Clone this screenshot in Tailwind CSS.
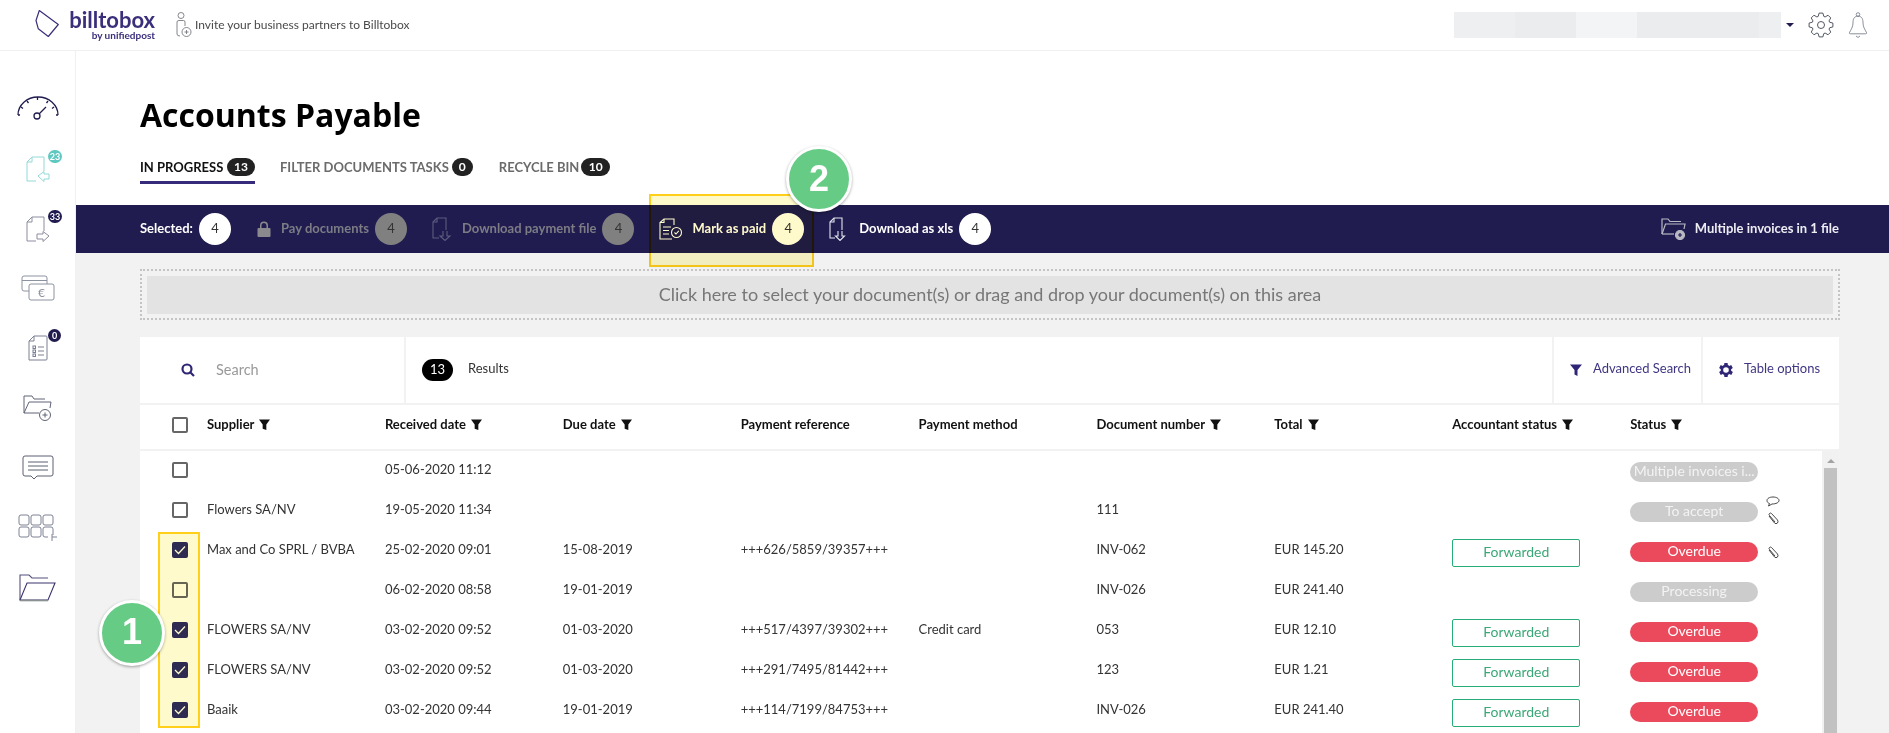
<!DOCTYPE html>
<html lang="en">
<head>
    <meta charset="UTF-8">
    <title>Accounts Payable - Billtobox</title>
    <script src="https://cdn.jsdelivr.net/npm/@tailwindcss/browser@4"></script>
</head>
<body class="h-screen overflow-hidden bg-[#f2f2f2] font-['Lato','Liberation_Sans',sans-serif] text-[13px] text-[#333]">
    <div class="relative h-[733px] w-[1889px] overflow-hidden">
        <!-- Top bar -->
        <header class="flex h-[51px] items-center border-b border-[#f0f0f0] bg-white pl-[35px]">
            <svg class="mb-[5px] h-[28px] w-[24px]" viewBox="0 0 24 28" fill="none" stroke="#3a2f7a" stroke-width="1.200"><path d="M4.300 1.500 L23.300 15.500 L13.300 27.500 L3.300 19.800 L1 11.500 Z" stroke-linejoin="round"/></svg>
            <div class="ml-[11px] flex w-[85px] flex-col items-end text-[#3a2f7a]">
                <span class="text-[22px] leading-[20px] font-bold">billtobox</span>
                <span class="text-[10px] leading-[10px] font-bold whitespace-nowrap">by unifiedpost</span>
            </div>
            <svg class="ml-[21px] h-[26px] w-[16px]" viewBox="0 0 16 26" fill="none" stroke="#77797f" stroke-width="0.900"><circle cx="5" cy="3.500" r="3"/><path d="M1 22 V10 Q1 8.500 3 8.500 H7.500 Q9 8.500 9 10 V14"/><path d="M1 22 Q1 24 4 24"/><circle cx="10.500" cy="20" r="4.500"/><path d="M10.500 18 V22 M8.500 20 H12.500"/></svg>
            <span class="ml-[3px] text-[12px] text-[#4a4a4a]">Invite your business partners to Billtobox</span>
            <div class="ml-auto flex items-center">
                <div class="flex h-[26px] w-[327px]">
                    <div class="w-[61px] bg-[#eeeff0]"></div>
                    <div class="w-[61px] bg-[#ebecee]"></div>
                    <div class="w-[61px] bg-[#f3f4f6]"></div>
                    <div class="w-[122px] bg-[#ebecee]"></div>
                    <div class="w-[22px] bg-[#eeeff0]"></div>
                </div>
                <div class="ml-[5px] h-0 w-0 border-x-[4px] border-t-[4px] border-x-transparent border-t-[#201c50]"></div>
                <svg class="ml-[14px] h-[26px] w-[26px]" viewBox="0 0 26 26" fill="none" stroke="#3f4450" stroke-width="0.900"><circle cx="13" cy="13" r="3.500"/><path d="M10.200 4.400 L11.100 1.100 H14.900 L15.800 4.400 L17.100 4.940 L20.070 3.240 L22.760 5.930 L21.060 8.900 L21.600 10.200 L24.900 11.100 V14.900 L21.600 15.800 L21.060 17.100 L22.760 20.070 L20.070 22.760 L17.100 21.060 L15.800 21.600 L14.900 24.900 H11.100 L10.200 21.600 L8.900 21.060 L5.930 22.760 L3.240 20.070 L4.940 17.100 L4.400 15.800 L1.100 14.900 V11.100 L4.400 10.200 L4.940 8.900 L3.240 5.930 L5.930 3.240 L8.900 4.940 Z" stroke-linejoin="round"/></svg>
                <svg class="mr-[21px] ml-[14px] h-[26px] w-[20px]" viewBox="0 0 20 26" fill="none" stroke="#6b7280" stroke-width="0.800"><circle cx="10" cy="2.500" r="1.800"/><path d="M10 4.200 C5.500 4.200 5 8 5 11 C5 15 3 17.500 1.500 20.500 Q1 21.800 2.500 21.800 H17.500 Q19 21.800 18.500 20.500 C17 17.500 15 15 15 11 C15 8 14.500 4.200 10 4.200 Z"/><path d="M8 24 L10 25.500 L12 24"/></svg>
            </div>
        </header>

        <div class="flex h-[682px]">
            <!-- Sidebar -->
            <aside class="flex w-[76px] shrink-0 flex-col border-r border-[#f0f0f0] bg-white pt-[27px]">
                <div class="flex h-[60px] items-center justify-center">
                    <svg class="h-[24px] w-[42px]" viewBox="0 0 42 24" fill="none" stroke="#201c50" stroke-width="1.300"><path d="M1 19 A20 18 0 0 1 41 19"/><path d="M1 19 H3 M4 11 L6 12.500 M10 5 L11.500 7 M20.500 1 V4 M31 5 L29.500 7 M37 11 L35 12.500 M41 19 H39"/><circle cx="20" cy="20" r="3"/><path d="M22 18 L29 11"/></svg>
                </div>
                <div class="relative flex h-[62px] items-center justify-center">
                    <svg class="h-[26px] w-[24px]" viewBox="0 0 24 26" fill="none" stroke="#93d9d8" stroke-width="1"><path d="M18 15 V1 H6 L1 6 V25 H10"/><path d="M6 1 V6 H1"/><path d="M12 20 L18 15.500 V18 H23 V23 H18 V25.500 Z" stroke-linejoin="round"/></svg>
                    <span class="absolute top-[12px] left-[48px] flex h-[13px] w-[14px] items-center justify-center rounded-full bg-[#5fc8c0] text-[9px] font-bold text-white">23</span>
                </div>
                <div class="relative flex h-[58px] items-center justify-center">
                    <svg class="h-[26px] w-[24px]" viewBox="0 0 24 26" fill="none" stroke="#8b8d9f" stroke-width="1"><path d="M18 15 V1 H6 L1 6 V25 H10"/><path d="M6 1 V6 H1"/><path d="M23 20 L17 15.500 V18 H11 V23 H17 V25.500 Z" stroke-linejoin="round"/></svg>
                    <span class="absolute top-[10px] left-[48px] flex h-[13px] w-[14px] items-center justify-center rounded-full bg-[#201c50] text-[9px] font-bold text-white">33</span>
                </div>
                <div class="flex h-[60px] items-center justify-center">
                    <svg class="h-[26px] w-[34px]" viewBox="0 0 34 26" fill="none" stroke="#8d92a0" stroke-width="1"><path d="M8 16 H3 Q1 16 1 14 V3 Q1 1 3 1 H24 Q26 1 26 3 V9"/><path d="M1 5.500 H26"/><rect x="8" y="9" width="25" height="16" rx="2"/><text x="20.500" y="21.500" font-size="12" fill="#8d92a0" stroke="none" text-anchor="middle">€</text></svg>
                </div>
                <div class="relative flex h-[60px] items-center justify-center">
                    <svg class="h-[26px] w-[20px]" viewBox="0 0 20 26" fill="none" stroke="#7b8093" stroke-width="1"><path d="M18 1 H6 L1 6 V25 H18 Q19 25 19 24 V2 Q19 1 18 1 Z"/><path d="M6 1 V6 H1"/><rect x="5" y="11" width="2.500" height="2.500"/><rect x="5" y="15" width="2.500" height="2.500"/><rect x="5" y="19" width="2.500" height="2.500"/><path d="M10 12 H16 M10 16 H16 M10 20 H16"/></svg>
                    <span class="absolute top-[11px] left-[48px] flex h-[13px] w-[13px] items-center justify-center rounded-full bg-[#201c50] text-[9px] font-bold text-white">0</span>
                </div>
                <div class="flex h-[60px] items-center justify-center">
                    <svg class="h-[28px] w-[30px]" viewBox="0 0 30 28" fill="none" stroke="#5f6474" stroke-width="1"><path d="M1 19 V2 H9 L11 5 H22"/><path d="M1 19 L6 8 H28 L27 14"/><path d="M1 19 H16"/><circle cx="22" cy="21" r="5.500"/><path d="M22 18.500 V23.500 M19.500 21 H24.500"/></svg>
                </div>
                <div class="flex h-[60px] items-center justify-center">
                    <svg class="h-[26px] w-[32px]" viewBox="0 0 32 26" fill="none" stroke="#5a6070" stroke-width="1"><path d="M3 1 H29 Q31 1 31 3 V19 Q31 21 29 21 H15 L12 24 L9 21 H3 Q1 21 1 19 V3 Q1 1 3 1 Z"/><path d="M6 7 H26 M6 11 H26 M6 15 H26"/></svg>
                </div>
                <div class="flex h-[60px] items-center justify-center">
                    <svg class="h-[28px] w-[40px]" viewBox="0 0 40 28" fill="none" stroke="#7d8293" stroke-width="1"><rect x="1" y="1" width="10" height="10" rx="2"/><rect x="13" y="1" width="10" height="10" rx="2"/><rect x="25" y="1" width="10" height="10" rx="2"/><rect x="1" y="13" width="10" height="10" rx="2"/><rect x="13" y="13" width="10" height="10" rx="2"/><path d="M35 21 V15 Q35 13 33 13 H27 Q25 13 25 15 V21 Q25 23 27 23 H30"/><path d="M34 23 H39 M34 20 V27"/></svg>
                </div>
                <div class="flex h-[60px] items-center justify-center">
                    <svg class="h-[28px] w-[37px]" viewBox="0 0 37 28" fill="none" stroke="#3b3470" stroke-width="1.100"><path d="M1 26 V1 H10 L13 4 H29" stroke="#55507d"/><path d="M1 26 L8 9 H36 L29 26 Z"/><path d="M1 26.500 H29" stroke="#8b9092" stroke-width="1.600"/></svg>
                </div>
            </aside>

            <main class="min-w-0 flex-1">
                <!-- Heading and tabs -->
                <section class="h-[154px] bg-white pt-[44px] pl-[64px]">
                    <h1 class="font-['Open_Sans',sans-serif] text-[32px] leading-[40px] font-bold text-black">Accounts Payable</h1>
                    <nav class="mt-[22px] flex text-[13px] font-bold whitespace-nowrap">
                        <div class="flex h-[27px] w-[115px] items-start border-b-[3px] border-[#352b7a] pt-px text-[#111]">
                            <span class="leading-[18px]">IN PROGRESS</span>
                            <span class="ml-auto flex h-[18px] w-[28px] items-center justify-center rounded-full bg-[#222] text-[12px] text-white">13</span>
                        </div>
                        <div class="ml-[25px] flex items-start pt-px text-[#6b6b6b]">
                            <span class="leading-[18px]">FILTER DOCUMENTS TASKS</span>
                            <span class="ml-[3px] flex h-[18px] w-[21px] items-center justify-center rounded-full bg-[#222] text-[12px] text-white">0</span>
                        </div>
                        <div class="ml-[26px] flex items-start pt-px text-[#6b6b6b]">
                            <span class="leading-[18px]">RECYCLE BIN</span>
                            <span class="ml-[2px] flex h-[18px] w-[29px] items-center justify-center rounded-full bg-[#222] text-[12px] text-white">10</span>
                        </div>
                    </nav>
                </section>

                <!-- Bulk action bar -->
                <section class="flex h-[48px] items-center bg-[#201c50] pr-[50px] pl-[64px] font-bold text-[#7c7c85]">
                    <span class="mb-px text-white">Selected:</span>
                    <span class="ml-[6px] flex h-[32px] w-[32px] items-center justify-center rounded-full bg-white font-normal text-[#333]">4</span>
                    <svg class="ml-[26px] h-[16px] w-[14px]" viewBox="0 0 14 16" fill="#8a8a8e"><path d="M3 7 V4.500 A4 4 0 0 1 11 4.500 V7 H9.500 V4.500 A2.500 2.500 0 0 0 4.500 4.500 V7 Z"/><rect x="0.500" y="7" width="13" height="9" rx="1"/></svg>
                    <span class="mb-px ml-[10px]">Pay documents</span>
                    <span class="ml-[6px] flex h-[32px] w-[32px] items-center justify-center rounded-full bg-[#808080] font-normal text-[#333]">4</span>
                    <svg class="ml-[25px] h-[24px] w-[20px]" viewBox="0 0 20 24" fill="none" stroke="#5d5d7c" stroke-width="1.100"><path d="M14 13 V1 H5 L1 5 V21 H7"/><path d="M5 1 V5 H1"/><path d="M11 14 V19 H8 L13 23.500 L18 19 H15 V14"/></svg>
                    <span class="mb-px ml-[10px]">Download payment file</span>
                    <span class="ml-[6px] flex h-[32px] w-[32px] items-center justify-center rounded-full bg-[#808080] font-normal text-[#333]">4</span>
                    <svg class="ml-[25px] h-[24px] w-[24px]" viewBox="0 0 24 24" fill="none" stroke="#ffffff" stroke-width="1.100"><path d="M15 8 V2 H5 L1 5.500 V22 H13"/><path d="M5 2 V5.500 H1"/><path d="M4 10 H12 M4 13.500 H10 M4 17 H10"/><circle cx="17.500" cy="15.500" r="5"/><path d="M15.500 15.500 L17 17 L19.800 13.800"/></svg>
                    <span class="mb-px ml-[9px] text-white">Mark as paid</span>
                    <span class="ml-[6px] flex h-[32px] w-[32px] items-center justify-center rounded-full bg-white font-normal text-[#333]">4</span>
                    <svg class="ml-[25px] h-[24px] w-[18px]" viewBox="0 0 18 24" fill="none" stroke="#e4e4ec" stroke-width="1.100"><path d="M13 13 V1 H5 L1 5 V21 H6"/><path d="M5 1 V5 H1"/><path d="M9 14 V19 H6.500 L11 23.500 L15.500 19 H13 V14"/></svg>
                    <span class="mb-px ml-[12px] text-white">Download as xls</span>
                    <span class="ml-[6px] flex h-[32px] w-[32px] items-center justify-center rounded-full bg-white font-normal text-[#333]">4</span>
                    <svg class="ml-auto h-[22px] w-[25px]" viewBox="0 0 25 22" fill="none" stroke="#b9b9c4" stroke-width="1.200"><path d="M1 16 V1 H7 L9 3.500 H20"/><path d="M1 16 L4.500 6 H24 L23 11"/><path d="M1 16 H13"/><circle cx="19" cy="17" r="4.500" fill="#b9b9c4"/><path d="M19 15 V19 M17 17 H21" stroke="#201c50"/></svg>
                    <span class="mb-px ml-[9px] text-[#ececf2]">Multiple invoices in 1 file</span>
                </section>

                <!-- Drop zone -->
                <section class="mt-[16px] mr-[49px] ml-[64px] h-[51px] border-2 border-dotted border-[#c4c4c4] px-[5px] pt-[5px]">
                    <div class="flex h-[38px] items-center justify-center bg-[#e3e3e3] pb-[2px] text-[18px] text-[#777]">Click here to select your document(s) or drag and drop your document(s) on this area</div>
                </section>

                <!-- Table card -->
                <section class="mt-[17px] mr-[50px] ml-[64px] bg-white">
                    <div class="flex h-[68px] items-stretch border-b-2 border-[#f2f2f2]">
                        <div class="flex w-[266px] items-center border-r-2 border-[#f2f2f2] pl-[41px]">
                            <svg class="h-[14px] w-[14px]" viewBox="0 0 14 14" fill="none" stroke="#2f2775" stroke-width="2.200"><circle cx="6" cy="6" r="4.500"/><path d="M9.500 9.500 L13 13"/></svg>
                            <span class="mb-px ml-[21px] text-[14.500px] text-[#999]">Search</span>
                        </div>
                        <div class="flex flex-1 items-center pl-[16px]">
                            <span class="flex h-[22px] w-[31px] items-center justify-center rounded-full bg-black text-[13px] text-white">13</span>
                            <span class="mb-[2px] ml-[15px] text-[#333]">Results</span>
                        </div>
                        <div class="flex w-[149px] items-center border-l-2 border-[#f2f2f2] pl-[16px] text-[#3f3683]">
                            <svg class="h-[12px] w-[12px]" viewBox="0 0 12 12" fill="#2f2775"><path d="M0 0.500 H12 L7.500 6 V12 L4.500 10.500 V6 Z"/></svg>
                            <span class="mb-[2px] ml-[11px]">Advanced Search</span>
                        </div>
                        <div class="flex w-[138px] items-center border-l-2 border-[#f2f2f2] pl-[15px] text-[#3f3683]">
                            <svg class="h-[16px] w-[16px]" viewBox="3 2 20 20" fill="#2f2775"><path d="M19.400 13a7.500 7.500 0 0 0 0-2l2.100-1.600-2-3.500-2.500 1a7.500 7.500 0 0 0-1.700-1L15 3.200h-4l-.4 2.700a7.500 7.500 0 0 0-1.700 1l-2.500-1-2 3.500L6.500 11a7.500 7.500 0 0 0 0 2l-2.100 1.600 2 3.500 2.500-1a7.500 7.500 0 0 0 1.700 1l.4 2.700h4l.4-2.700a7.500 7.500 0 0 0 1.700-1l2.500 1 2-3.500zM13 15.500a3.500 3.500 0 1 1 0-7 3.500 3.500 0 0 1 0 7z"/></svg>
                            <span class="mb-[2px] ml-[10px]">Table options</span>
                        </div>
                    </div>

                    <!-- Column headers -->
                    <div class="grid h-[46px] grid-cols-[67px_repeat(9,177.900px)] items-center border-b-2 border-[#f2f2f2] pb-[5px] font-bold text-[#111]">
                        <div class="pl-[32px]"><span class="block h-[16px] w-[16px] rounded-[2px] border-2 border-[#666]"></span></div>
                        <div class="flex items-center gap-[5px]">Supplier <svg class="h-[11px] w-[11px]" viewBox="0 0 12 12" fill="#111"><path d="M0 0.500 H12 L8 6 V12 L4 10.500 V6 Z"/></svg></div>
                        <div class="flex items-center gap-[5px]">Received date <svg class="h-[11px] w-[11px]" viewBox="0 0 12 12" fill="#111"><path d="M0 0.500 H12 L8 6 V12 L4 10.500 V6 Z"/></svg></div>
                        <div class="flex items-center gap-[5px]">Due date <svg class="h-[11px] w-[11px]" viewBox="0 0 12 12" fill="#111"><path d="M0 0.500 H12 L8 6 V12 L4 10.500 V6 Z"/></svg></div>
                        <div>Payment reference</div>
                        <div>Payment method</div>
                        <div class="flex items-center gap-[5px]">Document number <svg class="h-[11px] w-[11px]" viewBox="0 0 12 12" fill="#111"><path d="M0 0.500 H12 L8 6 V12 L4 10.500 V6 Z"/></svg></div>
                        <div class="flex items-center gap-[5px]">Total <svg class="h-[11px] w-[11px]" viewBox="0 0 12 12" fill="#111"><path d="M0 0.500 H12 L8 6 V12 L4 10.500 V6 Z"/></svg></div>
                        <div class="flex items-center gap-[5px]">Accountant status <svg class="h-[11px] w-[11px]" viewBox="0 0 12 12" fill="#111"><path d="M0 0.500 H12 L8 6 V12 L4 10.500 V6 Z"/></svg></div>
                        <div class="flex items-center gap-[5px]">Status <svg class="h-[11px] w-[11px]" viewBox="0 0 12 12" fill="#111"><path d="M0 0.500 H12 L8 6 V12 L4 10.500 V6 Z"/></svg></div>
                    </div>

                    <!-- Rows -->
                    <div class="flex">
                        <div class="-mt-px flex-1">
                            <div class="grid h-[40px] grid-cols-[67px_repeat(9,177.900px)] items-center">
                                <div class="pl-[32px]"><span class="block h-[16px] w-[16px] rounded-[2px] border-2 border-[#666]"></span></div>
                                <div></div>
                                <div>05-06-2020 11:12</div>
                                <div></div><div></div><div></div><div></div><div></div><div></div>
                                <div class="mt-[4px] flex h-[20px] w-[128px] items-center justify-center rounded-full bg-[#cccccc] pb-[3px] text-[14px] text-[#f3f3f3]">Multiple invoices i...</div>
                            </div>
                            <div class="grid h-[40px] grid-cols-[67px_repeat(9,177.900px)] items-center">
                                <div class="pl-[32px]"><span class="block h-[16px] w-[16px] rounded-[2px] border-2 border-[#666]"></span></div>
                                <div>Flowers SA/NV</div>
                                <div>19-05-2020 11:34</div>
                                <div></div><div></div><div></div>
                                <div>111</div>
                                <div></div><div></div>
                                <div class="relative mt-[4px] flex h-[20px] w-[128px] items-center justify-center rounded-full bg-[#cccccc] pb-[3px] text-[14px] text-[#f3f3f3]">
                                    To accept
                                    <svg class="absolute top-[-6px] left-[136px] h-[11px] w-[14px]" viewBox="0 0 14 11" fill="none" stroke="#333" stroke-width="0.900"><path d="M7 1 C3.500 1 1 2.500 1 4.500 C1 6 2 7 3.500 7.500 L2.500 10 L6 8 C10 8 13 6.500 13 4.500 C13 2.500 10.500 1 7 1 Z"/></svg>
                                    <svg class="absolute top-[10px] left-[137px] h-[13px] w-[12px]" viewBox="0 0 12 13" fill="none" stroke="#333" stroke-width="0.900"><path d="M2 4 L7.500 11 Q9 12.500 10.500 11 Q11.500 9.500 10.500 8 L4.500 1.500 Q3.500 0.500 2.500 1.500 Q1.500 2.500 2.500 3.500 L8 10"/></svg>
                                </div>
                            </div>
                            <div class="grid h-[40px] grid-cols-[67px_repeat(9,177.900px)] items-center">
                                <div class="pl-[32px]"><span class="flex h-[16px] w-[16px] items-center justify-center rounded-[2px] bg-[#2f2a66]"><svg class="h-[10px] w-[12px]" viewBox="0 0 12 10" fill="none" stroke="#fff" stroke-width="1.300"><path d="M1 5 L4.500 8.500 L11 1.500"/></svg></span></div>
                                <div>Max and Co SPRL / BVBA</div>
                                <div>25-02-2020 09:01</div>
                                <div>15-08-2019</div>
                                <div>+++626/5859/39357+++</div>
                                <div></div>
                                <div>INV-062</div>
                                <div>EUR 145.20</div>
                                <div class="mt-[6px] flex h-[28px] w-[128px] items-center justify-center rounded-[2px] border border-[#27ae78] pb-[3px] text-[14px] text-[#3aa876]">Forwarded</div>
                                <div class="relative mt-[4px] flex h-[20px] w-[128px] items-center justify-center rounded-full bg-[#ea4a5c] pb-[3px] text-[14px] text-white">
                                    Overdue
                                    <svg class="absolute top-[4px] left-[137px] h-[13px] w-[12px]" viewBox="0 0 12 13" fill="none" stroke="#333" stroke-width="0.900"><path d="M2 4 L7.500 11 Q9 12.500 10.500 11 Q11.500 9.500 10.500 8 L4.500 1.500 Q3.500 0.500 2.500 1.500 Q1.500 2.500 2.500 3.500 L8 10"/></svg>
                                </div>
                            </div>
                            <div class="grid h-[40px] grid-cols-[67px_repeat(9,177.900px)] items-center">
                                <div class="pl-[32px]"><span class="block h-[16px] w-[16px] rounded-[2px] border-2 border-[#666]"></span></div>
                                <div></div>
                                <div>06-02-2020 08:58</div>
                                <div>19-01-2019</div>
                                <div></div><div></div>
                                <div>INV-026</div>
                                <div>EUR 241.40</div>
                                <div></div>
                                <div class="mt-[4px] flex h-[20px] w-[128px] items-center justify-center rounded-full bg-[#cccccc] pb-[3px] text-[14px] text-[#f3f3f3]">Processing</div>
                            </div>
                            <div class="grid h-[40px] grid-cols-[67px_repeat(9,177.900px)] items-center">
                                <div class="pl-[32px]"><span class="flex h-[16px] w-[16px] items-center justify-center rounded-[2px] bg-[#2f2a66]"><svg class="h-[10px] w-[12px]" viewBox="0 0 12 10" fill="none" stroke="#fff" stroke-width="1.300"><path d="M1 5 L4.500 8.500 L11 1.500"/></svg></span></div>
                                <div>FLOWERS SA/NV</div>
                                <div>03-02-2020 09:52</div>
                                <div>01-03-2020</div>
                                <div>+++517/4397/39302+++</div>
                                <div>Credit card</div>
                                <div>053</div>
                                <div>EUR 12.10</div>
                                <div class="mt-[6px] flex h-[28px] w-[128px] items-center justify-center rounded-[2px] border border-[#27ae78] pb-[3px] text-[14px] text-[#3aa876]">Forwarded</div>
                                <div class="mt-[4px] flex h-[20px] w-[128px] items-center justify-center rounded-full bg-[#ea4a5c] pb-[3px] text-[14px] text-white">Overdue</div>
                            </div>
                            <div class="grid h-[40px] grid-cols-[67px_repeat(9,177.900px)] items-center">
                                <div class="pl-[32px]"><span class="flex h-[16px] w-[16px] items-center justify-center rounded-[2px] bg-[#2f2a66]"><svg class="h-[10px] w-[12px]" viewBox="0 0 12 10" fill="none" stroke="#fff" stroke-width="1.300"><path d="M1 5 L4.500 8.500 L11 1.500"/></svg></span></div>
                                <div>FLOWERS SA/NV</div>
                                <div>03-02-2020 09:52</div>
                                <div>01-03-2020</div>
                                <div>+++291/7495/81442+++</div>
                                <div></div>
                                <div>123</div>
                                <div>EUR 1.21</div>
                                <div class="mt-[6px] flex h-[28px] w-[128px] items-center justify-center rounded-[2px] border border-[#27ae78] pb-[3px] text-[14px] text-[#3aa876]">Forwarded</div>
                                <div class="mt-[4px] flex h-[20px] w-[128px] items-center justify-center rounded-full bg-[#ea4a5c] pb-[3px] text-[14px] text-white">Overdue</div>
                            </div>
                            <div class="grid h-[40px] grid-cols-[67px_repeat(9,177.900px)] items-center">
                                <div class="pl-[32px]"><span class="flex h-[16px] w-[16px] items-center justify-center rounded-[2px] bg-[#2f2a66]"><svg class="h-[10px] w-[12px]" viewBox="0 0 12 10" fill="none" stroke="#fff" stroke-width="1.300"><path d="M1 5 L4.500 8.500 L11 1.500"/></svg></span></div>
                                <div>Baaik</div>
                                <div>03-02-2020 09:44</div>
                                <div>19-01-2019</div>
                                <div>+++114/7199/84753+++</div>
                                <div></div>
                                <div>INV-026</div>
                                <div>EUR 241.40</div>
                                <div class="mt-[6px] flex h-[28px] w-[128px] items-center justify-center rounded-[2px] border border-[#27ae78] pb-[3px] text-[14px] text-[#3aa876]">Forwarded</div>
                                <div class="mt-[4px] flex h-[20px] w-[128px] items-center justify-center rounded-full bg-[#ea4a5c] pb-[3px] text-[14px] text-white">Overdue</div>
                            </div>
                        </div>
                        <!-- Scrollbar -->
                        <div class="flex h-[282px] w-[17px] shrink-0 flex-col items-center bg-[#f1f1f1]">
                            <div class="mt-[8px] h-0 w-0 border-x-[4px] border-b-[4px] border-x-transparent border-b-[#a3a3a3]"></div>
                            <div class="mt-[5px] w-[13px] flex-1 bg-[#c1c1c1]"></div>
                        </div>
                    </div>
                </section>
            </main>
        </div>

        <!-- Tutorial annotations -->
        <div class="absolute top-[532px] left-[158px] h-[196px] w-[42px] border-2 border-[#ffcf1a] bg-[#fff79a]/50 mix-blend-multiply"></div>
        <div class="absolute top-[194px] left-[649px] h-[73px] w-[165px] border-2 border-[#ffcf1a] bg-[#fff79a]/50 mix-blend-multiply"></div>
        <div class="absolute top-[600px] left-[99px] flex h-[66px] w-[66px] items-center justify-center rounded-full border-[3px] border-white bg-[#66cc85] pb-[2px] font-['Liberation_Sans',sans-serif] text-[36px] font-bold text-white shadow-[0_1px_3px_rgba(0,0,0,0.35)]">1</div>
        <div class="absolute top-[146px] left-[786px] flex h-[66px] w-[66px] items-center justify-center rounded-full border-[3px] border-white bg-[#66cc85] font-['Liberation_Sans',sans-serif] text-[36px] font-bold text-white shadow-[0_1px_3px_rgba(0,0,0,0.35)]">2</div>
    </div>
</body>
</html>
